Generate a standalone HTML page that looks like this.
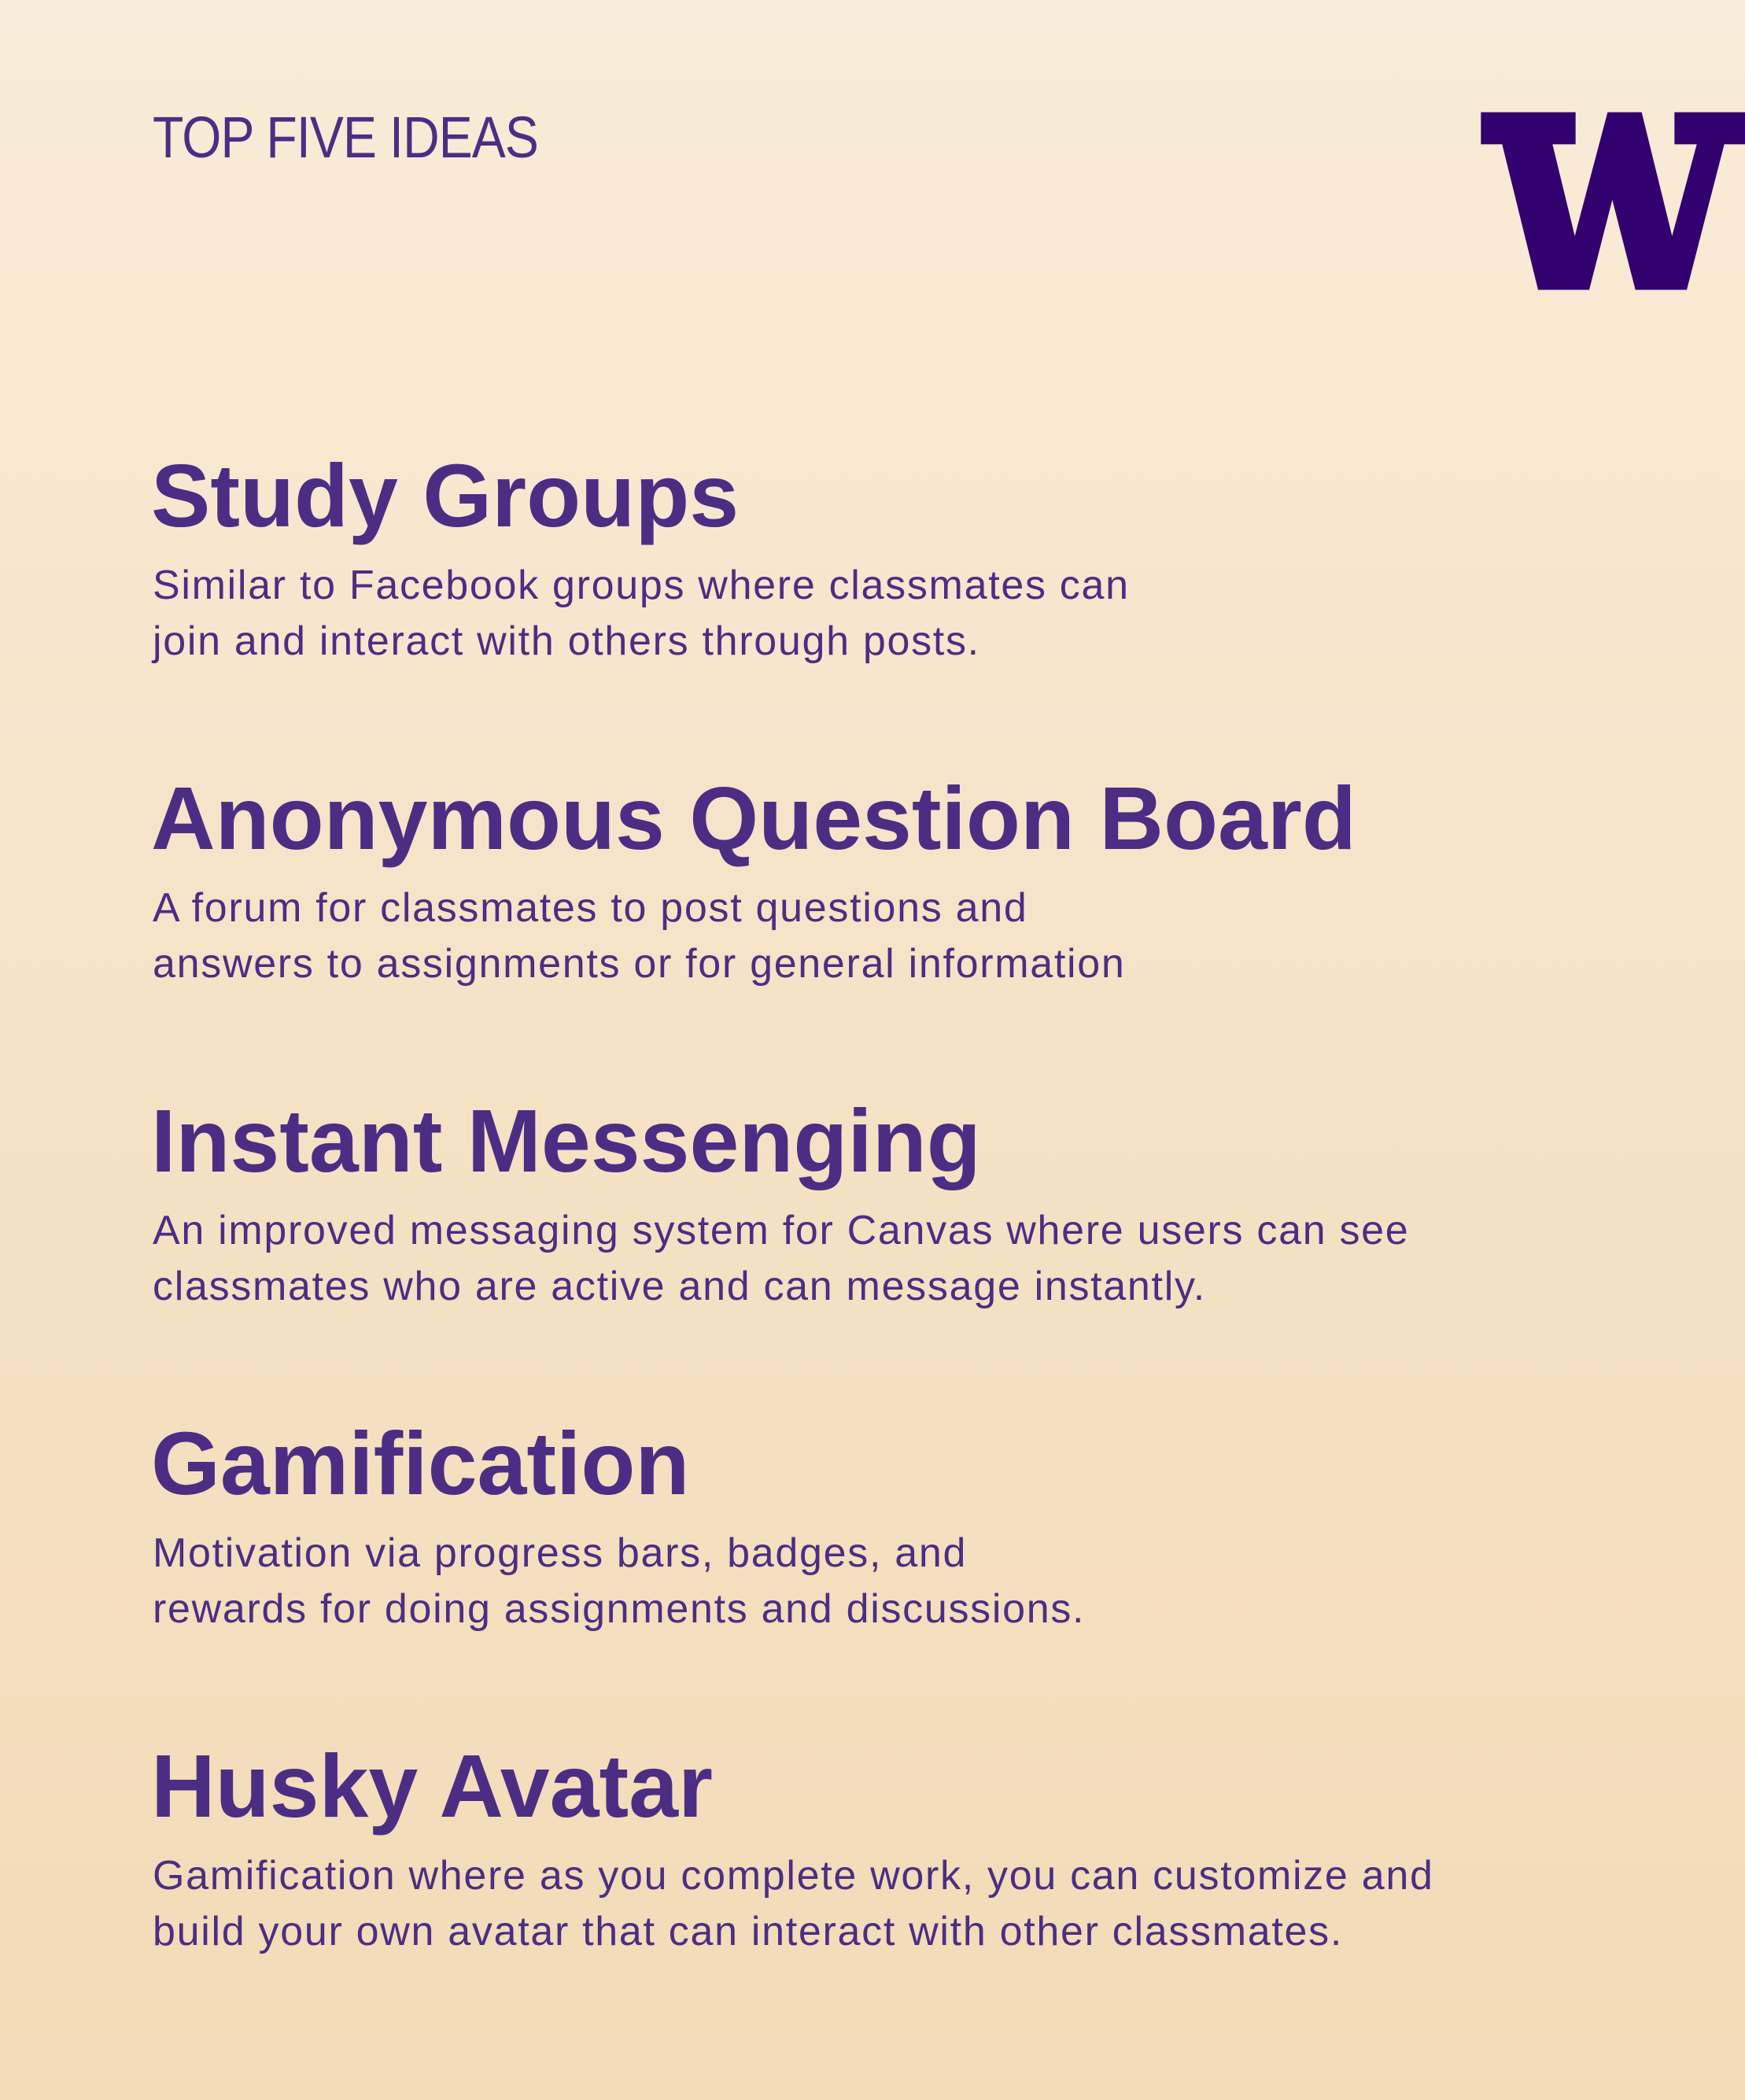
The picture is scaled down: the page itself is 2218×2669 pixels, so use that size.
<!DOCTYPE html>
<html><head><meta charset="utf-8"><style>
html,body{margin:0;padding:0}
body{width:2218px;height:2669px;position:relative;overflow:hidden;background:linear-gradient(180deg,#f9ecd8 0%,#f5e2c6 50%,#f2dbb7 100%);font-family:"Liberation Sans",sans-serif;color:#4b2e83}
.top{position:absolute;left:194px;top:138px;font-size:74px;line-height:74px;letter-spacing:-1px;transform:scaleX(0.87);transform-origin:0 0;white-space:nowrap}
h2{position:absolute;left:192px;margin:0;font-size:113px;line-height:113px;font-weight:bold;letter-spacing:0px;white-space:nowrap}
p{position:absolute;left:194px;margin:0;font-size:52px;line-height:71px;letter-spacing:1.7px;white-space:nowrap}
</style></head><body>
<div class="top">TOP FIVE IDEAS</div>
<svg style="position:absolute;left:1850px;top:100px" width="368" height="300" viewBox="0 0 1104 900">
<path fill="#33006f" d="M97 128H458V250H370L455 600L580 128H710L826 600L920 250H835V128H1200V250H1025L882 805H686L598 462L510 805H315L178 250H97Z"/>
</svg>
<h2 style="top:574px">Study Groups</h2>
<p style="top:709px">Similar to Facebook groups where classmates can<br>join and interact with others through posts.</p>
<h2 style="top:984px">Anonymous Question Board</h2>
<p style="top:1119px">A forum for classmates to post questions and<br>answers to assignments or for general information</p>
<h2 style="top:1394px">Instant Messenging</h2>
<p style="top:1529px">An improved messaging system for Canvas where users can see<br>classmates who are active and can message instantly.</p>
<h2 style="top:1804px">Gamification</h2>
<p style="top:1939px">Motivation via progress bars, badges, and<br>rewards for doing assignments and discussions.</p>
<h2 style="top:2214px">Husky Avatar</h2>
<p style="top:2349px">Gamification where as you complete work, you can customize and<br>build your own avatar that can interact with other classmates.</p>
</body></html>
